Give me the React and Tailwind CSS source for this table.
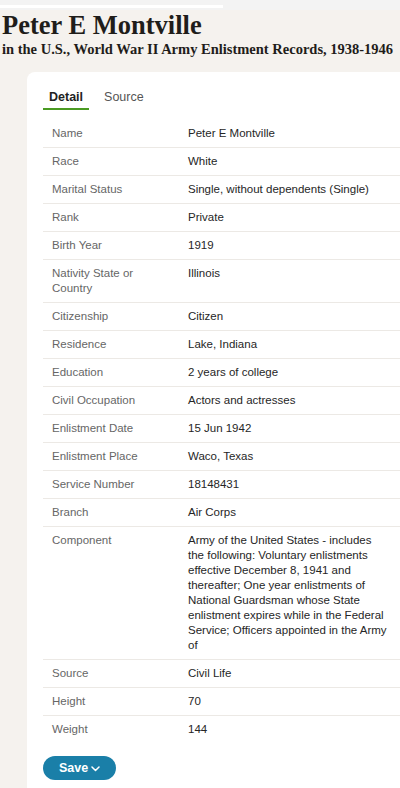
import React from 'react';

const ROWS = [
  { label: 'Name', value: 'Peter E Montville' },
  { label: 'Race', value: 'White' },
  { label: 'Marital Status', value: 'Single, without dependents (Single)' },
  { label: 'Rank', value: 'Private' },
  { label: 'Birth Year', value: '1919' },
  { label: 'Nativity State or Country', value: 'Illinois' },
  { label: 'Citizenship', value: 'Citizen' },
  { label: 'Residence', value: 'Lake, Indiana' },
  { label: 'Education', value: '2 years of college' },
  { label: 'Civil Occupation', value: 'Actors and actresses' },
  { label: 'Enlistment Date', value: '15 Jun 1942' },
  { label: 'Enlistment Place', value: 'Waco, Texas' },
  { label: 'Service Number', value: '18148431' },
  { label: 'Branch', value: 'Air Corps' },
  {
    label: 'Component',
    value:
      'Army of the United States - includes the following: Voluntary enlistments effective December 8, 1941 and thereafter; One year enlistments of National Guardsman whose State enlistment expires while in the Federal Service; Officers appointed in the Army of',
  },
  { label: 'Source', value: 'Civil Life' },
  { label: 'Height', value: '70' },
  { label: 'Weight', value: '144' },
];

function ChevronDown() {
  return (
    <svg width="9" height="6" viewBox="0 0 9 6" fill="none" className="mt-[1px]">
      <path d="M1 1l3.5 3.5L8 1" stroke="white" strokeWidth="1.5" strokeLinecap="round" strokeLinejoin="round" />
    </svg>
  );
}

export default function App() {
  return (
    <div className="min-h-[788px] w-[400px] overflow-hidden bg-[#f5f2ee] flex flex-col font-['Liberation_Sans',Arial,sans-serif]">
      {/* top strip */}
      <div className="h-[10px] bg-[#f3f3f3] pt-[4.5px]">
        <div className="h-[3px] w-[223px] bg-white" />
      </div>

      <header className="h-[62px] pl-[2px] font-['Liberation_Serif','Times_New_Roman',serif] font-bold text-[#1f1d1a] whitespace-nowrap">
        <h1 className="text-[26.5px] leading-[30px]">Peter E Montville</h1>
        <p className="text-[14.5px] leading-[19px]">in the U.S., World War II Army Enlistment Records, 1938-1946</p>
      </header>

      <div className="flex-1 flex pl-[27px]">
        <main className="flex-1 bg-white rounded-tl-[8px] pl-[16px] pt-[18px]">
          <nav className="flex gap-[9px] text-[12.5px] leading-[15px]">
            <div className="px-[6px] pb-[3px] border-b-[2.5px] border-[#4a9a22] font-bold text-[#222]">Detail</div>
            <div className="px-[6px] pb-[3px] border-b-[2.5px] border-transparent text-[#555]">Source</div>
          </nav>

          <div className="mt-[10px] text-[11.5px] leading-[15px]">
            {ROWS.map((row, i) => (
              <div
                key={row.label}
                className={`grid grid-cols-[136px_1fr] py-[6px] ${
                  i < ROWS.length - 1 ? 'border-b border-[#ece9e5]' : ''
                }`}
              >
                <div className="pl-[9px] pr-[14px] text-[#666]">{row.label}</div>
                <div className="pl-[9px] max-w-[211px] text-[#262626]">{row.value}</div>
              </div>
            ))}
          </div>

          <button className="mt-[13px] h-[24px] w-[73px] rounded-full bg-[#1a7fa8] flex items-center justify-center gap-[3px] text-white font-bold text-[12.5px]">
            Save
            <ChevronDown />
          </button>
        </main>
      </div>
    </div>
  );
}
